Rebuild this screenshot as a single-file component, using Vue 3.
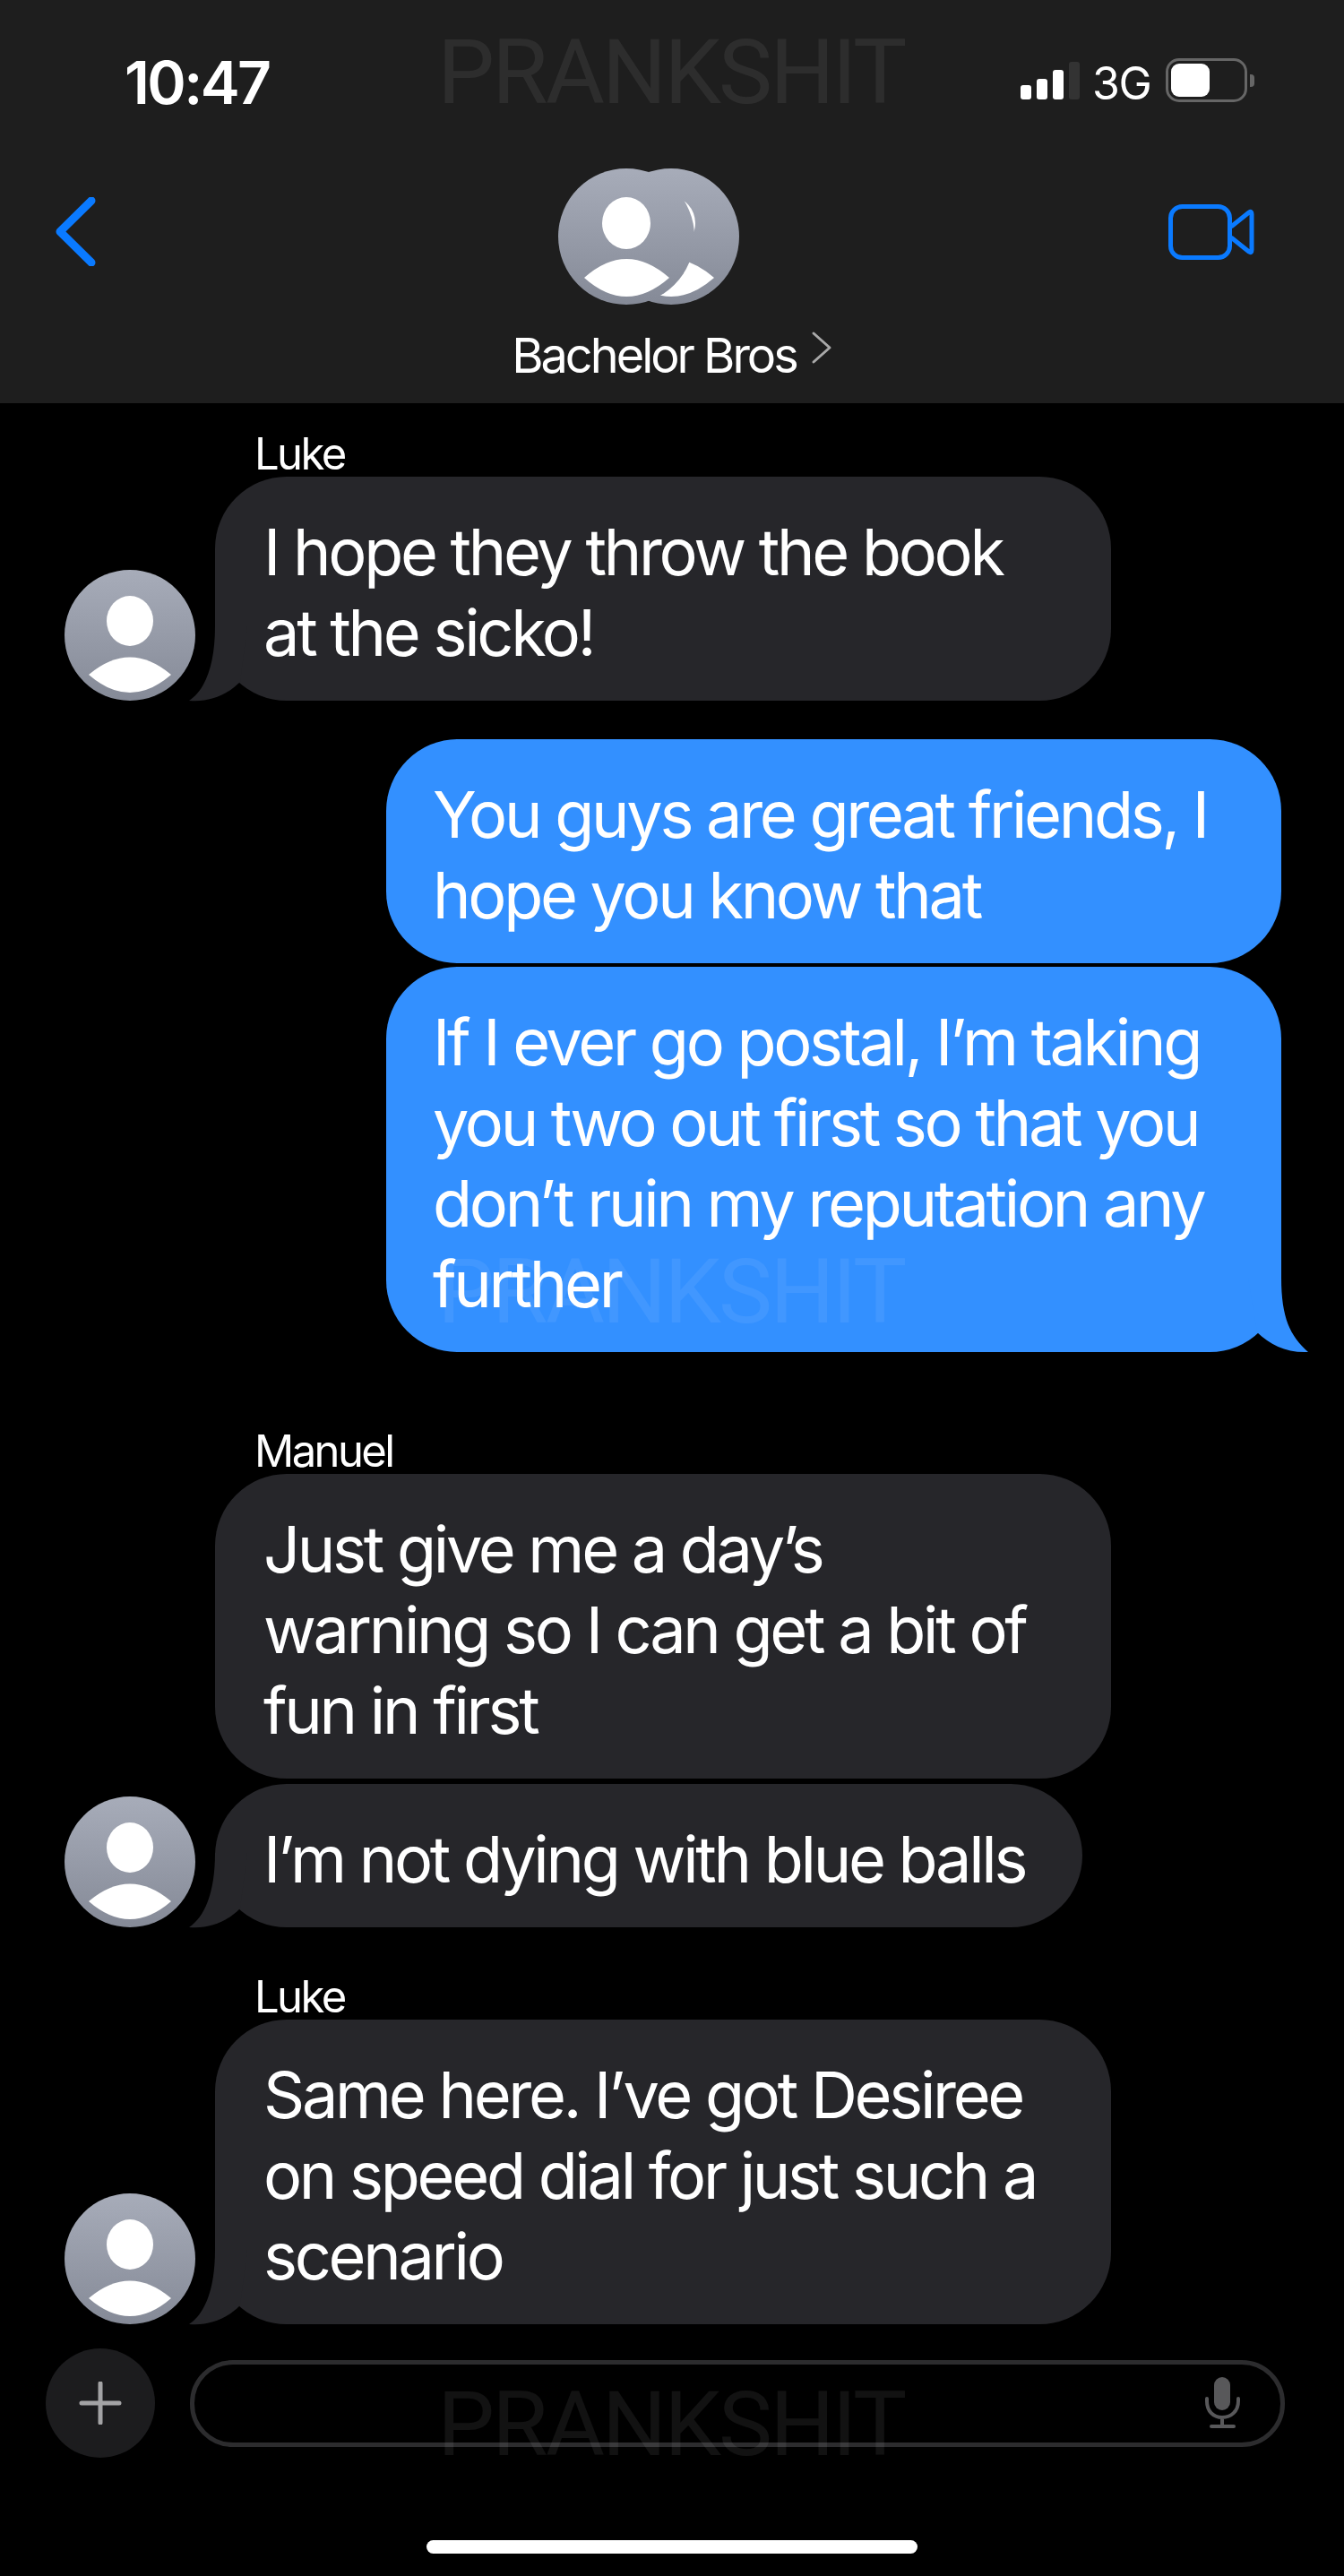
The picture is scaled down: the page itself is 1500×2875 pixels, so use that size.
<script setup>
const groups = [
  {
    name: 'Luke',
    top: 34,
    bubbles: [{ lines: ['I hope they throw the book', 'at the sicko!'], tail: true }],
  },
  {
    mine: true,
    top: 43,
    bubbles: [
      { lines: ['You guys are great friends, I', 'hope you know that'] },
      { lines: ['If I ever go postal, I’m taking', 'you two out first so that you', 'don’t ruin my reputation any', 'further'], tail: true },
    ],
  },
  {
    name: 'Manuel',
    top: 88,
    bubbles: [
      { lines: ['Just give me a day’s', 'warning so I can get a bit of', 'fun in first'] },
      { lines: ['I’m not dying with blue balls'], tail: true, short: true },
    ],
  },
  {
    name: 'Luke',
    top: 55,
    bubbles: [{ lines: ['Same here. I’ve got Desiree', 'on speed dial for just such a', 'scenario'], tail: true }],
  },
]

const watermarks = [31, 1392, 2656]
</script>

<template>
  <div class="phone">
    <header class="top">
      <div class="status">
        <span class="time">10:47</span>
        <div class="status-right">
          <div class="signal">
            <i class="b1"></i><i class="b2"></i><i class="b3"></i><i class="b4"></i>
          </div>
          <span class="net">3G</span>
          <div class="battery"><div class="charge"></div></div>
          <div class="nub"></div>
        </div>
      </div>
      <div class="nav">
        <svg class="back" width="45" height="77" viewBox="0 0 45 77">
          <path d="M40 4 L5 38.5 L40 73" fill="none" stroke="#0a7aff" stroke-width="9" stroke-linecap="round" stroke-linejoin="round" />
        </svg>
        <div class="contact">
          <svg class="group-avatar" width="202" height="152" viewBox="0 0 202 152">
            <defs>
              <linearGradient id="grp" x1="0" y1="0" x2="0" y2="1">
                <stop offset="0" stop-color="#a7acb9" />
                <stop offset="1" stop-color="#858a97" />
              </linearGradient>
            </defs>
            <circle cx="126" cy="76" r="76" fill="url(#grp)" />
            <ellipse cx="126" cy="61" rx="27" ry="29" fill="#fff" />
            <path d="M79 122 Q126 80 174 122 Q126 164 79 122 Z" fill="#fff" />
            <circle cx="76" cy="76" r="76" fill="url(#grp)" />
            <ellipse cx="76" cy="61" rx="27" ry="29" fill="#fff" />
            <path d="M29 122 Q76 80 124 122 Q76 164 29 122 Z" fill="#fff" />
          </svg>
          <div class="title">
            <span>Bachelor Bros</span>
            <svg class="more" width="24" height="38" viewBox="0 0 24 38">
              <path d="M3 3 L21 19 L3 35" fill="none" stroke="#a9a9a9" stroke-width="3" stroke-linecap="round" stroke-linejoin="round" />
            </svg>
          </div>
        </div>
        <svg class="video" width="96" height="62" viewBox="0 0 96 62">
          <rect x="2.5" y="2.5" width="66" height="57" rx="13" fill="none" stroke="#0a7aff" stroke-width="5" />
          <path d="M70 25 L90 9 Q93 7 93 11 L93 51 Q93 55 90 53 L70 37" fill="none" stroke="#0a7aff" stroke-width="5" stroke-linejoin="round" />
        </svg>
      </div>
    </header>

    <main class="thread">
      <section v-for="(g, i) in groups" :key="i" :class="['group', { mine: g.mine }]" :style="{ marginTop: g.top + 'px' }">
        <div v-if="g.name" class="sender">{{ g.name }}</div>
        <div v-for="(b, j) in g.bubbles" :key="j" class="row">
          <template v-if="!g.mine">
            <svg v-if="b.tail" class="avatar" width="146" height="146" viewBox="0 0 146 146">
              <defs>
                <linearGradient id="ava" x1="0" y1="0" x2="0" y2="1">
                  <stop offset="0" stop-color="#a7acb9" />
                  <stop offset="1" stop-color="#858a97" />
                </linearGradient>
              </defs>
              <circle cx="73" cy="73" r="73" fill="url(#ava)" />
              <ellipse cx="73" cy="57" rx="26" ry="28" fill="#fff" />
              <path d="M27 117 Q73 78 119 117 Q73 157 27 117 Z" fill="#fff" />
            </svg>
            <div v-else class="avatar"></div>
          </template>
          <div :class="['bubble', { short: b.short }]">
            <span v-for="line in b.lines" :key="line" class="line">{{ line }}</span>
            <svg v-if="b.tail && !g.mine" class="tail tail-left" width="70" height="90" viewBox="0 0 70 90">
              <path d="M29 0 C29 45 17 72 0 83 C21 85 41 78 57 62 L65 0 Z" fill="#26262a" />
            </svg>
            <svg v-if="b.tail && g.mine" class="tail tail-right" width="72" height="90" viewBox="0 0 72 90">
              <path d="M42 0 C42 45 52 65 72 83 C47 84 30 75 15 61 L5 0 Z" fill="#3390ff" />
            </svg>
          </div>
        </div>
      </section>
    </main>

    <footer class="composer">
      <div class="plus">
        <svg width="48" height="48" viewBox="0 0 48 48">
          <path d="M24 2 V46 M3 24 H45" fill="none" stroke="#a3a3a5" stroke-width="5" stroke-linecap="round" />
        </svg>
      </div>
      <div class="field">
        <svg class="mic" width="42" height="58" viewBox="0 0 42 58">
          <rect x="11" y="0" width="18" height="37" rx="9" fill="#58585a" />
          <path d="M3 24 V27 C3 38 10 45 20 45 C30 45 38 38 38 27 V24 M20 45 V54" fill="none" stroke="#58585a" stroke-width="4" stroke-linecap="round" />
          <rect x="6" y="53" width="29" height="4" rx="2" fill="#58585a" />
        </svg>
      </div>
    </footer>
    <div class="home"></div>

    <div v-for="y in watermarks" :key="y" class="mark" :style="{ top: y + 'px' }">PRANKSHIT</div>
  </div>
</template>

<style>
html, body {
  margin: 0;
  background: #000;
}
</style>

<style scoped>
.phone {
  position: relative;
  width: 1500px;
  height: 2875px;
  overflow: hidden;
  background: #000;
  color: #fff;
  font-family: Inter, "Liberation Sans", sans-serif;
}

.top {
  height: 450px;
  background: #1e1e1e;
}

.status {
  display: flex;
  height: 188px;
  box-sizing: border-box;
  padding: 60px 100px 0 139px;
}
.time {
  font-size: 66px;
  line-height: 64px;
  font-weight: 600;
  letter-spacing: -2.6px;
}
.status-right {
  display: flex;
  align-items: flex-start;
  margin-left: auto;
  padding-top: 5px;
}
.signal {
  display: flex;
  align-items: flex-end;
  gap: 6px;
  height: 42px;
  margin-top: 4px;
}
.signal i {
  display: block;
  width: 12px;
  border-radius: 3px;
  background: #fff;
}
.signal .b1 { height: 16px; }
.signal .b2 { height: 23px; }
.signal .b3 { height: 33px; }
.signal .b4 { height: 42px; background: #333; }
.net {
  width: 68px;
  margin: 4px 0 0 14px;
  font-size: 50px;
  line-height: 48px;
  letter-spacing: -1.5px;
}
.battery {
  box-sizing: border-box;
  width: 91px;
  height: 49px;
  margin-left: 14px;
  padding: 3px;
  border: 3px solid #666;
  border-radius: 15px;
}
.charge {
  width: 43px;
  height: 37px;
  border-radius: 9px;
  background: #fff;
}
.nub {
  width: 5px;
  height: 14px;
  margin: 18px 0 0 3px;
  border-radius: 0 4px 4px 0;
  background: #666;
}

.nav {
  display: grid;
  grid-template-columns: 1fr auto 1fr;
}
.back {
  margin: 32px 0 0 62px;
}
.video {
  justify-self: end;
  margin: 40px 100px 0 0;
}
.contact {
  display: flex;
  flex-direction: column;
  align-items: center;
}
.group-avatar {
  display: block;
  margin-right: 52px;
}
.title {
  display: flex;
  align-items: flex-start;
  gap: 16px;
  height: 60px;
  margin-top: 27px;
  font-size: 54px;
  line-height: 60px;
  letter-spacing: -3px;
}
.more {
  margin-top: 2px;
}

.thread {
  display: flex;
  flex-direction: column;
}
.group {
  padding: 0 70px 0 72px;
}
.sender {
  height: 48px;
  margin-left: 212px;
  font-size: 49px;
  line-height: 46px;
  letter-spacing: -2.6px;
}
.row {
  display: flex;
  align-items: flex-end;
  gap: 22px;
  margin-bottom: 6px;
}
.mine .row {
  justify-content: flex-end;
  margin-bottom: 4px;
}
.row:last-child,
.mine .row:last-child {
  margin-bottom: 0;
}
.avatar {
  display: block;
  flex: none;
  width: 146px;
}
.bubble {
  position: relative;
  box-sizing: border-box;
  width: 1000px;
  padding: 39px 54px 31px;
  border-radius: 80px;
  background: #26262a;
  font-size: 72px;
  line-height: 90px;
  letter-spacing: -3.3px;
}
.bubble.short {
  width: 968px;
}
.mine .bubble {
  width: 999px;
  padding-left: 52px;
  background: #3390ff;
}
.line {
  display: block;
  white-space: nowrap;
}
.tail {
  position: absolute;
  bottom: -7px;
}
.tail-left {
  left: -29px;
}
.tail-right {
  right: -30px;
}

.composer {
  display: flex;
  align-items: center;
  gap: 39px;
  margin-top: 27px;
  padding-left: 51px;
}
.plus {
  display: flex;
  align-items: center;
  justify-content: center;
  width: 122px;
  height: 122px;
  border-radius: 50%;
  background: #1c1c1e;
}
.field {
  display: flex;
  align-items: center;
  justify-content: flex-end;
  box-sizing: border-box;
  width: 1222px;
  height: 97px;
  padding-right: 43px;
  border: 5px solid #2c2c2e;
  border-radius: 48px;
}
.home {
  width: 548px;
  height: 15px;
  margin: 92px auto 0;
  border-radius: 8px;
  background: #fff;
}

.mark {
  position: absolute;
  left: 0;
  width: 1498px;
  text-align: center;
  font-family: Roboto, sans-serif;
  font-size: 101px;
  line-height: 100px;
  letter-spacing: -2.7px;
  color: rgba(255, 255, 255, 0.07);
  pointer-events: none;
}
</style>
